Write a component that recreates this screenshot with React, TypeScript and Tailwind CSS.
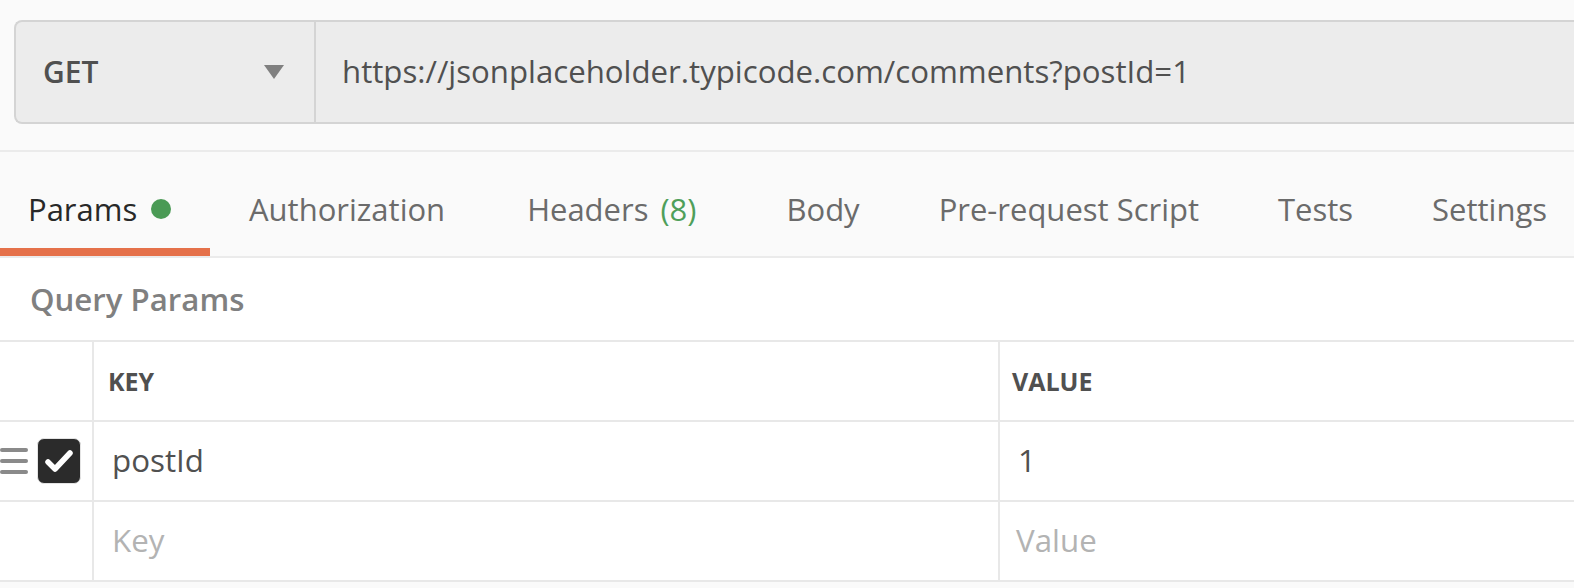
import React from "react";

export default function App() {
  const tabs = [
    { label: "Authorization", cls: "pl-[39px] pr-[41px]" },
    { label: "Headers", count: "(8)", cls: "pl-[41px] pr-[50px]" },
    { label: "Body", cls: "pl-[40px] pr-[39px]" },
    { label: "Pre-request Script", cls: "pl-[40px] pr-[39px]" },
    { label: "Tests", cls: "pl-[40px] pr-[39px]" },
    { label: "Settings", cls: "pl-[40px] pr-[39px]" },
  ];
  return (
    <div className="w-full h-[588px] overflow-hidden bg-white font-['Open_Sans',sans-serif]">
      {/* URL bar */}
      <div className="h-[152px] bg-[#fafafa] border-b-2 border-[#ebebeb] pt-[20px] pl-[14px] flex items-start">
        <div className="flex-1 h-[104px] flex bg-[#ececec] border-y-2 border-l-2 border-[#d4d4d4] rounded-l-[8px]">
          <div className="w-[300px] shrink-0 flex items-center pl-[27px] pr-[30px] border-r-2 border-[#d4d4d4]">
            <span className="text-[30px] font-semibold text-[#505050] leading-none">GET</span>
            <span className="ml-auto w-0 h-0 border-l-[10px] border-r-[10px] border-t-[14px] border-l-transparent border-r-transparent border-t-[#808080]"></span>
          </div>
          <div className="flex items-center pl-[26px] text-[31.2px] text-[#505050] leading-none whitespace-nowrap">
            https://jsonplaceholder.typicode.com/comments?postId=1
          </div>
        </div>
      </div>

      {/* Tabs */}
      <div className="h-[106px] bg-[#fafafa] border-b-2 border-[#ebebeb] flex items-stretch whitespace-nowrap text-[31px] leading-none">
        <div className="relative w-[210px] shrink-0 flex items-center pl-[28px] pt-[10px]">
          <span className="text-[#282828]">Params</span>
          <span className="ml-[14px] w-[20px] h-[20px] rounded-full bg-[#4a9a55]"></span>
          <span className="absolute left-0 right-0 bottom-0 h-[8px] bg-[#e5714a]"></span>
        </div>
        {tabs.map((t) => (
          <div key={t.label} className={`flex items-center pt-[10px] text-[#6b6b6b] ${t.cls}`}>
            <span>{t.label}</span>
            {t.count && <span className="ml-[12px] text-[#4f9f5a]">{t.count}</span>}
          </div>
        ))}
      </div>

      {/* Query Params label */}
      <div className="h-[82px] flex items-center pl-[30px] pt-[2px]">
        <span className="text-[31.2px] font-semibold text-[#808080] leading-none">Query Params</span>
      </div>

      {/* Table */}
      <div className="border-t-2 border-[#e8e8e8]">
        <div className="h-[80px] flex border-b-2 border-[#e8e8e8]">
          <div className="w-[94px] shrink-0 border-r-2 border-[#e8e8e8]"></div>
          <div className="w-[906px] shrink-0 border-r-2 border-[#e8e8e8] flex items-center pl-[14px]">
            <span className="text-[25px] font-bold text-[#505050] leading-none">KEY</span>
          </div>
          <div className="flex-1 flex items-center pl-[12px]">
            <span className="text-[25px] font-bold text-[#505050] leading-none">VALUE</span>
          </div>
        </div>
        <div className="h-[80px] flex border-b-2 border-[#e8e8e8]">
          <div className="w-[94px] shrink-0 border-r-2 border-[#e8e8e8] flex items-center">
            <div className="w-[28px] h-[26px] flex flex-col justify-between">
              <span className="block h-[4px] w-full rounded-full bg-[#8a8a8a]"></span>
              <span className="block h-[4px] w-full rounded-full bg-[#8a8a8a]"></span>
              <span className="block h-[4px] w-full rounded-full bg-[#8a8a8a]"></span>
            </div>
            <div className="ml-[9px] w-[44px] h-[46px] rounded-[7px] bg-[#2b2b2b] border border-[#e4e4e4] flex items-center justify-center">
              <svg width="30" height="24" viewBox="0 0 30 24" fill="none">
                <path d="M4 13 L11 20 L26 4" stroke="white" strokeWidth="5.5" strokeLinecap="round" strokeLinejoin="round" />
              </svg>
            </div>
          </div>
          <div className="w-[906px] shrink-0 border-r-2 border-[#e8e8e8] flex items-center pl-[18px]">
            <span className="text-[31.3px] text-[#505050] leading-none">postId</span>
          </div>
          <div className="flex-1 flex items-center pl-[18px]">
            <span className="text-[31.3px] text-[#505050] leading-none">1</span>
          </div>
        </div>
        <div className="h-[80px] flex border-b-2 border-[#e8e8e8]">
          <div className="w-[94px] shrink-0 border-r-2 border-[#e8e8e8]"></div>
          <div className="w-[906px] shrink-0 border-r-2 border-[#e8e8e8] flex items-center pl-[18px]">
            <span className="text-[31.3px] text-[#b3b3b3] leading-none">Key</span>
          </div>
          <div className="flex-1 flex items-center pl-[16px]">
            <span className="text-[31.3px] text-[#b3b3b3] leading-none">Value</span>
          </div>
        </div>
        <div className="h-[10px] bg-[#fafafa]"></div>
      </div>
    </div>
  );
}
